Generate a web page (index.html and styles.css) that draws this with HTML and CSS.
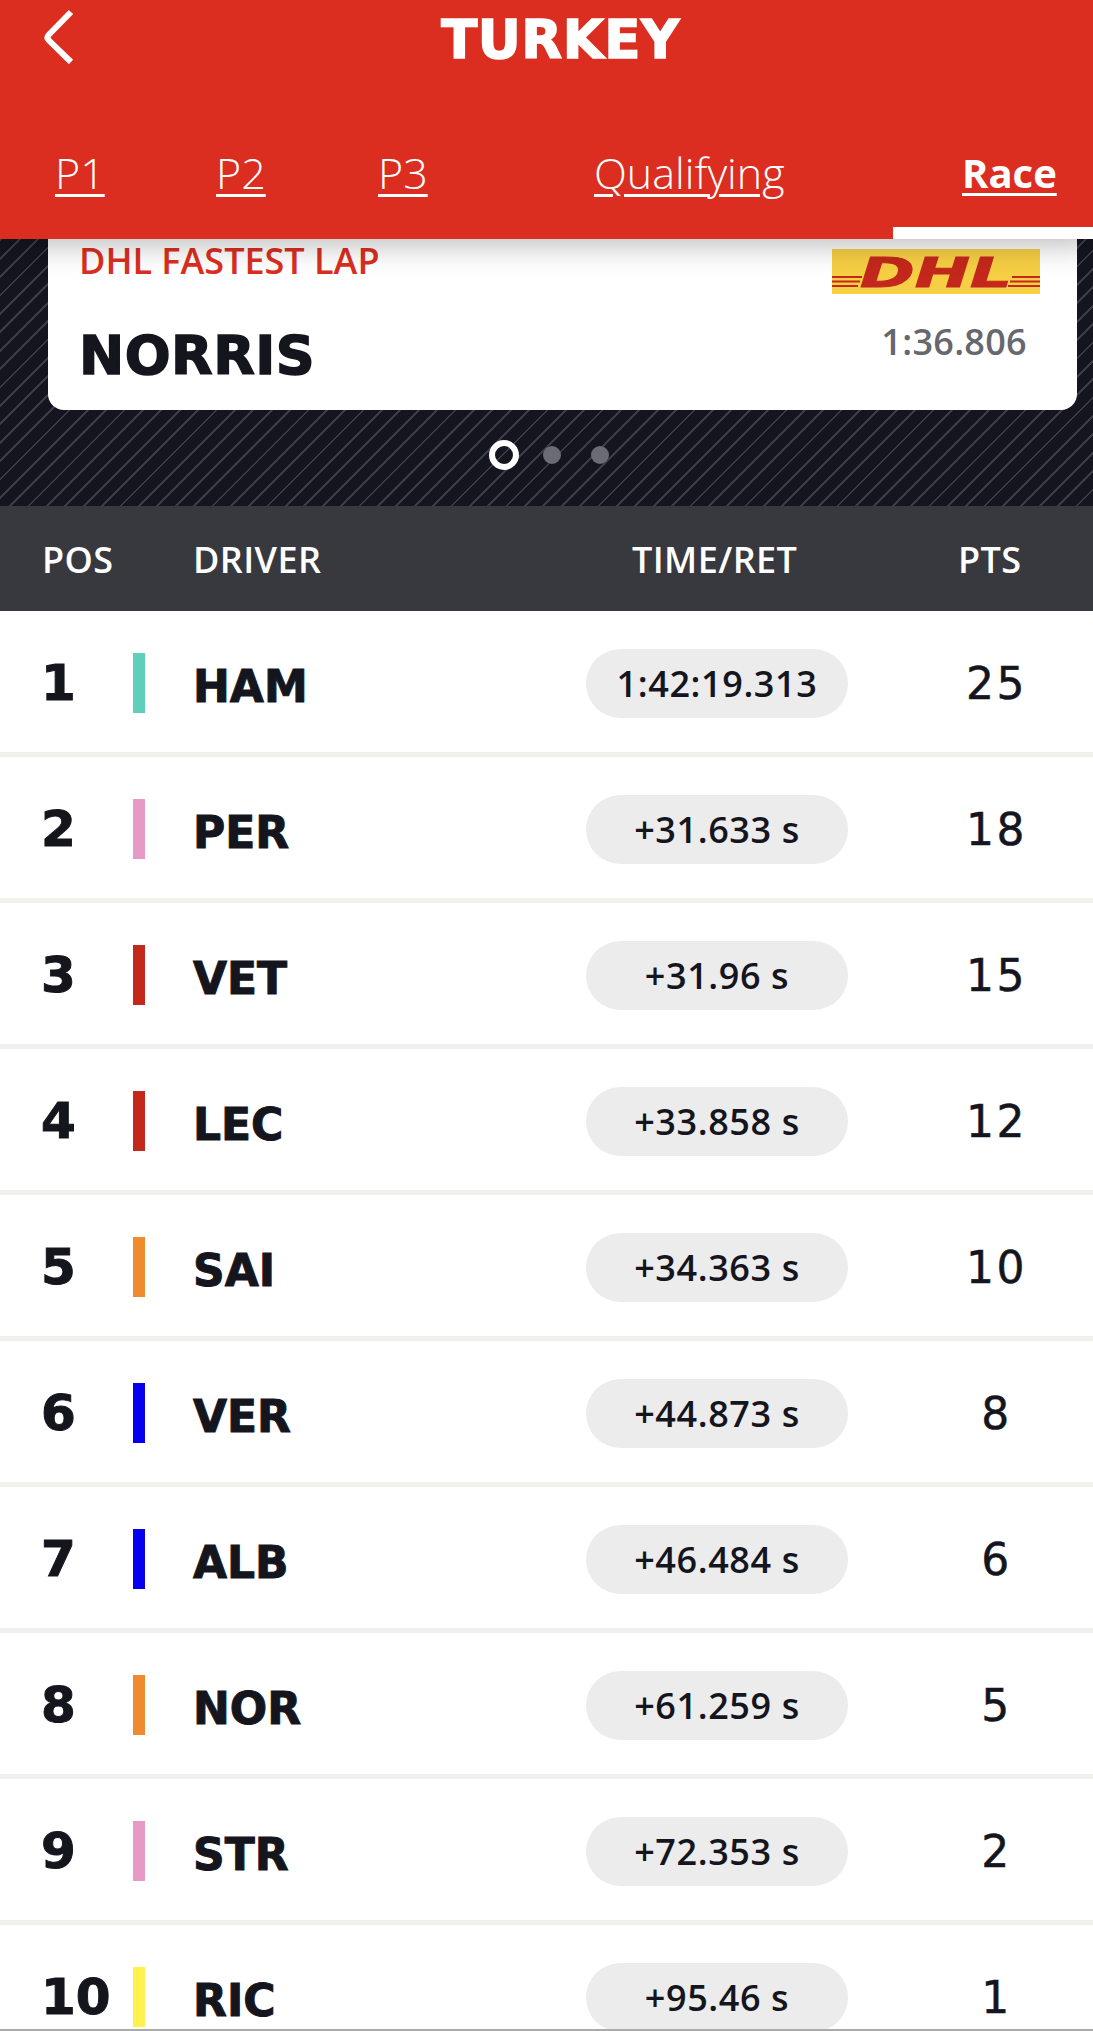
FILE: index.html
```html
<!DOCTYPE html>
<html lang="en">
<head>
<meta charset="utf-8">
<title>Turkey - Race</title>
<link rel="stylesheet" href="styles.css">
</head>
<body>
<div class="app">
  <header class="top">
    <div class="title-row">
      <svg class="back" width="34" height="60" viewBox="0 0 34 60"><path d="M30 4 L8 26.500 Q5 29.500 8 32.500 L30 54" fill="none" stroke="#fff" stroke-width="6"/></svg>
      <h1>TURKEY</h1>
    </div>
    <nav class="tabs">
      <a class="tab">P1</a>
      <a class="tab">P2</a>
      <a class="tab">P3</a>
      <a class="tab">Qualifying</a>
      <a class="tab active">Race</a>
    </nav>
  </header>
  <section class="hero">
    <div class="card">
      <div class="card-top">
        <span class="card-label">DHL FASTEST LAP</span>
        <svg class="dhl" width="208" height="45" viewBox="0 0 208 45">
          <rect width="208" height="45" fill="#f7cf45"/>
          <g fill="#c4281c">
            <rect x="0" y="27" width="30" height="2"/><rect x="0" y="31.500" width="28" height="2"/><rect x="0" y="36" width="26" height="2"/>
            <rect x="180" y="27" width="28" height="2"/><rect x="178" y="31.500" width="30" height="2"/><rect x="176" y="36" width="32" height="2"/>
          </g>
          <text class="dhl-text" x="28" y="38" textLength="152" lengthAdjust="spacingAndGlyphs">DHL</text>
        </svg>
      </div>
      <div class="card-bottom">
        <span class="card-name">NORRIS</span>
        <span class="card-time">1:36.806</span>
      </div>
    </div>
    <div class="dots"><i class="dot on"></i><i class="dot"></i><i class="dot"></i></div>
  </section>
  <div class="thead">
    <span>POS</span>
    <span>DRIVER</span>
    <span>TIME/RET</span>
    <span>PTS</span>
  </div>
  <div class="row"><span class="pos">1</span><i class="bar merc"></i><span class="name">HAM</span><span class="pill">1:42:19.313</span><span class="pts">25</span></div>
  <div class="row"><span class="pos">2</span><i class="bar rp"></i><span class="name">PER</span><span class="pill">+31.633 s</span><span class="pts">18</span></div>
  <div class="row"><span class="pos">3</span><i class="bar fer"></i><span class="name">VET</span><span class="pill">+31.96 s</span><span class="pts">15</span></div>
  <div class="row"><span class="pos">4</span><i class="bar fer"></i><span class="name">LEC</span><span class="pill">+33.858 s</span><span class="pts">12</span></div>
  <div class="row"><span class="pos">5</span><i class="bar mcl"></i><span class="name">SAI</span><span class="pill">+34.363 s</span><span class="pts">10</span></div>
  <div class="row"><span class="pos">6</span><i class="bar rb"></i><span class="name">VER</span><span class="pill">+44.873 s</span><span class="pts">8</span></div>
  <div class="row"><span class="pos">7</span><i class="bar rb"></i><span class="name">ALB</span><span class="pill">+46.484 s</span><span class="pts">6</span></div>
  <div class="row"><span class="pos">8</span><i class="bar mcl"></i><span class="name">NOR</span><span class="pill">+61.259 s</span><span class="pts">5</span></div>
  <div class="row"><span class="pos">9</span><i class="bar rp"></i><span class="name">STR</span><span class="pill">+72.353 s</span><span class="pts">2</span></div>
  <div class="row"><span class="pos">10</span><i class="bar ren"></i><span class="name">RIC</span><span class="pill">+95.46 s</span><span class="pts">1</span></div>
  <div class="edge"></div>
</div>
</body>
</html>
```
FILE: styles.css
```css
* { box-sizing: border-box; }
html, body { margin: 0; padding: 0; }
body { background: #fff; font-family: "Open Sans", sans-serif; color: #15151e; }
.app { position: relative; width: 1093px; height: 2031px; overflow: hidden; }

.top { position: relative; z-index: 2; height: 239px; background: #dc2e20; color: #fff; box-shadow: 0 4px 30px rgba(0,0,0,.3); }
.title-row { position: relative; height: 76px; display: flex; justify-content: center; padding: 10px 0 0 28px; }
.back { position: absolute; left: 41px; top: 8px; }
h1 { margin: 0; font: 700 53px/60px "DejaVu Sans", sans-serif; -webkit-text-stroke: 1.5px #fff; letter-spacing: .5px; }
.tabs { display: grid; grid-template-columns: 161px 162px 216px 368px 1fr; padding: 69px 0 0 55px; }
.tab { font-size: 43px; line-height: 56px; font-weight: 300; text-decoration: underline; text-decoration-thickness: 3px; text-underline-offset: 5px; white-space: nowrap; }
.active { font-size: 40px; font-weight: 700; }
.active::after { content: ""; position: absolute; right: 0; bottom: 0; width: 200px; height: 12px; background: #fff; }

.hero { height: 267px; padding: 0 16px 0 48px; background-color: #14151f;
  background-image: repeating-linear-gradient(135deg, #3c3c44 0 2px, transparent 2px 13px); }
.card { height: 171px; border-radius: 0 0 16px 16px; background: #fff; padding: 0 38px 0 31px; }
.card-top { display: flex; justify-content: space-between; align-items: flex-start; height: 77px; }
.card-label { font-size: 36px; line-height: 44px; color: #dc2e20; font-weight: 600; white-space: nowrap; }
.dhl { margin: 10px -1px 0 0; }
.dhl-text { font: italic 700 41px "DejaVu Sans", sans-serif; fill: #c4281c; stroke: #c4281c; stroke-width: 1; }
.card-bottom { display: flex; justify-content: space-between; align-items: flex-start; }
.card-name { font: 700 54px/60px "DejaVu Sans", sans-serif; margin-top: 10px; -webkit-text-stroke: 1.5px #15151e; letter-spacing: .5px; }
.card-time { font-size: 36px; line-height: 52px; color: #67676f; font-weight: 600; letter-spacing: .3px; margin: 0 12px 0 0; }
.dots { display: flex; align-items: center; gap: 30px; height: 90px; padding-left: 441px; }
.dot { display: block; width: 18px; height: 18px; border-radius: 50%; background: #6b6b73; }
.dot.on { width: 30px; height: 30px; margin-right: -6px; background: transparent; border: 6px solid #fff; }

.thead { display: grid; grid-template-columns: 151px 439px 326px 1fr; padding-left: 42px; height: 105px; background: #38383f; color: #fff; font-size: 36px; font-weight: 600; letter-spacing: .4px; line-height: 107px; }

.row { display: grid; grid-template-columns: 90px 61px 392px 262px 1fr; align-items: center; height: 146px; padding: 3px 0 0 41px; border-bottom: 5px solid #f0f0ec; }
.pos { font: 700 50px/60px "DejaVu Sans", sans-serif; -webkit-text-stroke: 1px #15151e; }
.bar { display: block; width: 12px; height: 60px; margin-left: 2px; }
.merc { background: #5fcfbb; } .rp { background: #e89ac7; } .fer { background: #c4281c; } .mcl { background: #f08a2f; } .rb { background: #0600ef; } .ren { background: #fff24f; }
.name { font: 700 44px/60px "DejaVu Sans", sans-serif; padding-top: 7px; margin-left: 1px; -webkit-text-stroke: 1px #15151e; }
.pill { display: flex; align-items: center; justify-content: center; height: 69px; margin-left: 2px; margin-right: -2px; border-radius: 35px; background: #ececec; font-size: 36px; font-weight: 600; letter-spacing: .6px; white-space: nowrap; }
.pts { font: 400 44px/60px "DejaVu Sans", sans-serif; padding-top: 2px; text-align: center; letter-spacing: 2.500px; padding-left: 54px; -webkit-text-stroke: .5px #15151e; }
.edge { position: absolute; left: 0; right: 0; bottom: 0; height: 2px; background: #aaa; }
```
